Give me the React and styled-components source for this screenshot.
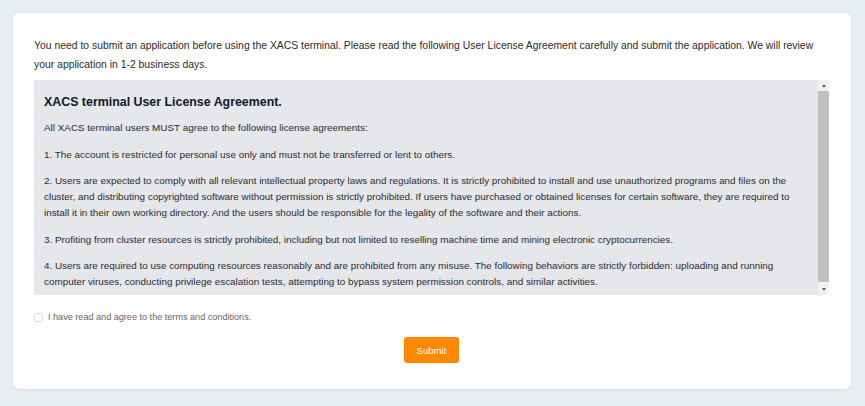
import React from "react";
import styled, { createGlobalStyle } from "styled-components";

const Global = createGlobalStyle`
  html, body { margin: 0; padding: 0; }
  body {
    background: #e7eef0;
    font-family: "Liberation Sans", Arial, sans-serif;
  }
  #root { padding: 13px 14px 16px 13px; }
`;

const Card = styled.div`
  background: #ffffff;
  border-radius: 6px;
  box-shadow: 0 1px 3px rgba(0, 0, 0, 0.08);
  padding: 23px 22px 26px 21px;
  display: flex;
  flex-direction: column;
`;

const Intro = styled.p`
  margin: 0 0 6px;
  font-size: 10.4px;
  line-height: 19px;
  color: #2b2b2b;
`;

const Agreement = styled.div`
  height: 215px;
  display: flex;
  background: #e5e7eb;
`;

const AgreementBody = styled.div`
  flex: 1;
  min-width: 0;
  overflow: hidden;
  padding: 12px 10px 0 10px;
  color: #2b2b2b;
`;

const ScrollBar = styled.div`
  width: 11px;
  display: flex;
  flex-direction: column;
  background: #f1f1f1;
`;

const ScrollButton = styled.div`
  height: 11px;
  display: flex;
  align-items: center;
  justify-content: center;

  &::before {
    content: "";
    width: 0;
    height: 0;
    border-left: 2.5px solid transparent;
    border-right: 2.5px solid transparent;
    ${(p) =>
      p.$dir === "up"
        ? "border-bottom: 3px solid #606060;"
        : "border-top: 3px solid #606060;"}
  }
`;

const ScrollTrack = styled.div`
  flex: 1;
  display: flex;
  flex-direction: column;
  padding: 0 0 2px;
`;

const ScrollThumb = styled.div`
  flex: 1;
  background: #c1c1c1;
`;

const Title = styled.h3`
  margin: 0 0 8px;
  font-size: 12.4px;
  line-height: 20px;
  font-weight: 700;
  color: #111827;
`;

const Para = styled.p`
  margin: 0 0 10.5px;
  font-size: 9.9px;
  line-height: 16px;
  color: #2b2b2b;
`;

const AgreeRow = styled.label`
  display: flex;
  align-items: center;
  gap: 5px;
  margin-top: 15px;
  height: 14px;
  font-size: 9.1px;
  color: #666;
  cursor: pointer;
`;

const Box = styled.span`
  width: 9px;
  height: 9px;
  box-sizing: border-box;
  border: 1px solid #dcdcdc;
  border-radius: 2px;
  background: #fff;
`;

const Actions = styled.div`
  display: flex;
  justify-content: center;
  margin-top: 13px;
`;

const SubmitButton = styled.button`
  width: 55px;
  height: 26px;
  border: none;
  border-radius: 3px;
  background: #ff8800;
  color: #fff;
  font-family: "Liberation Sans", Arial, sans-serif;
  font-size: 9.6px;
  padding: 0;
  cursor: pointer;
`;

const paragraphs = [
  "All XACS terminal users MUST agree to the following license agreements:",
  "1. The account is restricted for personal use only and must not be transferred or lent to others.",
  "2. Users are expected to comply with all relevant intellectual property laws and regulations. It is strictly prohibited to install and use unauthorized programs and files on the cluster, and distributing copyrighted software without permission is strictly prohibited. If users have purchased or obtained licenses for certain software, they are required to install it in their own working directory. And the users should be responsible for the legality of the software and their actions.",
  "3. Profiting from cluster resources is strictly prohibited, including but not limited to reselling machine time and mining electronic cryptocurrencies.",
  "4. Users are required to use computing resources reasonably and are prohibited from any misuse. The following behaviors are strictly forbidden: uploading and running computer viruses, conducting privilege escalation tests, attempting to bypass system permission controls, and similar activities.",
];

export default function App() {
  return (
    <>
      <Global />
      <Card>
        <Intro>
          You need to submit an application before using the XACS terminal. Please read the following User License
          Agreement carefully and submit the application. We will review your application in 1-2 business days.
        </Intro>
        <Agreement>
          <AgreementBody>
            <Title>XACS terminal User License Agreement.</Title>
            {paragraphs.map((p, i) => (
              <Para key={i}>{p}</Para>
            ))}
          </AgreementBody>
          <ScrollBar>
            <ScrollButton $dir="up" />
            <ScrollTrack>
              <ScrollThumb />
            </ScrollTrack>
            <ScrollButton $dir="down" />
          </ScrollBar>
        </Agreement>
        <AgreeRow>
          <Box />
          I have read and agree to the terms and conditions.
        </AgreeRow>
        <Actions>
          <SubmitButton>Submit</SubmitButton>
        </Actions>
      </Card>
    </>
  );
}
